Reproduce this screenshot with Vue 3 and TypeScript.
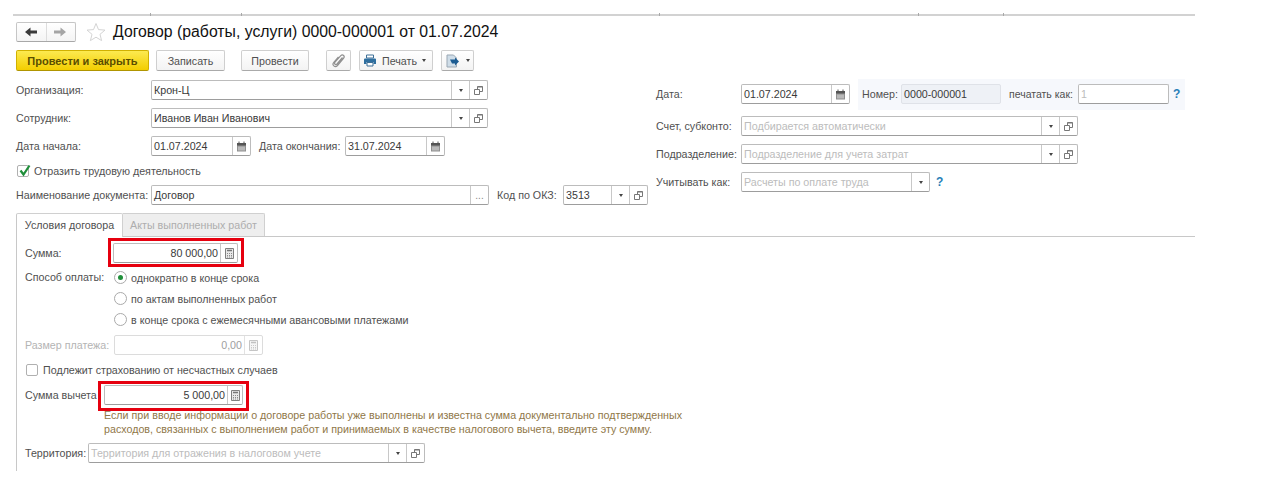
<template>
  <div class="page">
    <svg class="defs" width="0" height="0">
      <symbol id="i-open" viewBox="0 0 11 11">
        <path d="M4.500 4V1.500h5v5H7" fill="none" stroke="#777" />
        <path d="M4.500 2h5" stroke="#777" />
        <path d="M1.500 4.500h5v5h-5z" fill="#fff" stroke="#777" />
      </symbol>
      <symbol id="i-cal" viewBox="0 0 11 11">
        <path d="M1 2h9v8.500H1z" fill="#8f8f8f" />
        <path d="M1 2h9v2.500H1z" fill="#555" />
        <path d="M2 5.500h7v4H2z" fill="#b9b9b9" />
        <path d="M3 .5v2.500M8 .5v2.500" stroke="#555" />
      </symbol>
      <symbol id="i-calc" viewBox="0 0 11 11">
        <path d="M1.500 .5h8v10h-8z" fill="#e9e9e9" stroke="#808080" />
        <path d="M3 2.500h5" stroke="#777" stroke-width="1.500" />
        <path d="M3 5.500h5M3 7.500h5M3 9h5" stroke="#8a8a8a" stroke-dasharray="1 1" />
      </symbol>
    </svg>

    <i v-for="x in topTicks" :key="x" class="tick" :style="{ left: x + 'px' }"></i>

    <div class="title-row">
      <div class="nav-group">
        <span class="nav-cell">
          <svg width="13" height="10" viewBox="0 0 13 10"><path d="M0 5l5.500-4.500v3H12v3H5.500v3z" fill="#3a3a3a" /></svg>
        </span>
        <span class="nav-cell">
          <svg width="13" height="10" viewBox="0 0 13 10"><path d="M12 5L6.500.5v3H0v3h6.500v3z" fill="#a5a5a5" /></svg>
        </span>
      </div>
      <svg class="star" width="20" height="20" viewBox="0 0 20 20"><path d="M10 1.500l2.500 6.100 6.500.5-5 4.200 1.600 6.300-5.600-3.400-5.600 3.400L6 12.300 1 8.100l6.500-.5z" fill="none" stroke="#d4d4d4" /></svg>
      <h1 class="title">Договор (работы, услуги) 0000-000001 от 01.07.2024</h1>
    </div>

    <div class="toolbar">
      <button class="btn primary">Провести и закрыть</button>
      <button class="btn save">Записать</button>
      <button class="btn post">Провести</button>
      <button class="btn clip">
        <svg width="13" height="14" viewBox="0 0 13 14"><path d="M10.500 3.500 5 10c-1.300 1.400-3.200-.3-2-1.800l5.800-6.500c2-2 4.500.5 2.700 2.700L5.500 11.500c-2.500 2.700-6-.6-3.700-3.200L6.500 3" fill="none" stroke="#8f8f8f" stroke-width="1.200" /></svg>
      </button>
      <button class="btn print">
        <svg width="14" height="13" viewBox="0 0 14 13"><path d="M3.500 1h7v3h-7z" fill="#fff" stroke="#3d6f96" /><path d="M1 5.500q0-1 1-1h10q1 0 1 1V10h-2.500V8h-7v2H1z" fill="#2f6f9f" /><path d="M4 8.500h6v3.500H4z" fill="#fff" stroke="#3d6f96" /></svg>
        <span>Печать</span>
        <i class="caret"></i>
      </button>
      <button class="btn more">
        <svg width="14" height="14" viewBox="0 0 14 14"><path d="M1 1h6.500l3 3v9H1z" fill="#cfdde8" stroke="#9aa7b3" /><path d="M4 5.500l5 0V3.500l4 4-4 4v-2H6z" fill="#1c5c92" /></svg>
        <i class="caret"></i>
      </button>
    </div>

    <div class="head">
      <div class="head-left">
        <div class="row">
          <label class="lbl w135">Организация:</label>
          <div class="field w337"><span class="val">Крон-Ц</span><span class="cell"><i class="caret"></i></span><span class="cell"><svg class="ico"><use href="#i-open" /></svg></span></div>
        </div>
        <div class="row">
          <label class="lbl w135">Сотрудник:</label>
          <div class="field w337"><span class="val">Иванов Иван Иванович</span><span class="cell"><i class="caret"></i></span><span class="cell"><svg class="ico"><use href="#i-open" /></svg></span></div>
        </div>
        <div class="row">
          <label class="lbl w135">Дата начала:</label>
          <div class="field w100"><span class="val">01.07.2024</span><span class="cell"><svg class="ico"><use href="#i-cal" /></svg></span></div>
          <label class="lbl date-end">Дата окончания:</label>
          <div class="field w100"><span class="val">31.07.2024</span><span class="cell"><svg class="ico"><use href="#i-cal" /></svg></span></div>
        </div>
        <div class="row check-row">
          <span class="check">
            <svg width="14" height="13" viewBox="0 0 14 13"><path d="M2.500 6.500 5.500 10.500 11.500 1.500" fill="none" stroke="#1f8f3a" stroke-width="2.200" /></svg>
          </span>
          <span class="lbl">Отразить трудовую деятельность</span>
        </div>
        <div class="row name-row">
          <label class="lbl w135">Наименование документа:</label>
          <div class="field w338"><span class="val">Договор</span><span class="cell dots">...</span></div>
          <label class="lbl okz">Код по ОКЗ:</label>
          <div class="field w85"><span class="val">3513</span><span class="cell"><i class="caret"></i></span><span class="cell"><svg class="ico"><use href="#i-open" /></svg></span></div>
        </div>
      </div>

      <div class="head-right">
        <div class="row date-row">
          <label class="lbl w85">Дата:</label>
          <div class="field w109"><span class="val">01.07.2024</span><span class="cell"><svg class="ico"><use href="#i-cal" /></svg></span></div>
          <div class="num-panel">
            <label class="lbl">Номер:</label>
            <div class="field readonly w100"><span class="val">0000-000001</span></div>
            <label class="lbl small print-as">печатать как:</label>
            <div class="field w91"><span class="val ph">1</span></div>
            <span class="help">?</span>
          </div>
        </div>
        <div class="row">
          <label class="lbl w85">Счет, субконто:</label>
          <div class="field w337"><span class="val ph">Подбирается автоматически</span><span class="cell"><i class="caret"></i></span><span class="cell"><svg class="ico"><use href="#i-open" /></svg></span></div>
        </div>
        <div class="row">
          <label class="lbl w85">Подразделение:</label>
          <div class="field w337"><span class="val ph">Подразделение для учета затрат</span><span class="cell"><i class="caret"></i></span><span class="cell"><svg class="ico"><use href="#i-open" /></svg></span></div>
        </div>
        <div class="row">
          <label class="lbl w85">Учитывать как:</label>
          <div class="field w189"><span class="val ph">Расчеты по оплате труда</span><span class="cell"><i class="caret"></i></span></div>
          <span class="help help-inline">?</span>
        </div>
      </div>
    </div>

    <div class="tabs">
      <span class="tab active">Условия договора</span>
      <span class="tab">Акты выполненных работ</span>
    </div>

    <div class="tab-body">
      <div class="row">
        <label class="lbl w88">Сумма:</label>
        <div class="field w125 marked sum"><span class="val num">80 000,00</span><span class="cell"><svg class="ico"><use href="#i-calc" /></svg></span></div>
      </div>

      <div class="radios">
        <label class="lbl w89 pay-lbl">Способ оплаты:</label>
        <div class="radio-list">
          <div v-for="(opt, i) in payOptions" :key="opt" class="radio-row">
            <span class="radio" :class="{ on: i === 0 }"></span>
            <span class="lbl">{{ opt }}</span>
          </div>
        </div>
      </div>

      <div class="row pay-size">
        <label class="lbl w89 off">Размер платежа:</label>
        <div class="field w149 disabled"><span class="val num">0,00</span><span class="cell"><svg class="ico faded"><use href="#i-calc" /></svg></span></div>
      </div>

      <div class="row check-row insure">
        <span class="check"></span>
        <span class="lbl">Подлежит страхованию от несчастных случаев</span>
      </div>

      <div class="row">
        <label class="lbl w79">Сумма вычета</label>
        <div class="field w139 marked deduct"><span class="val num">5 000,00</span><span class="cell"><svg class="ico"><use href="#i-calc" /></svg></span></div>
      </div>

      <p class="note">
        Если при вводе информации о договоре работы уже выполнены и известна сумма документально подтвержденных<br />
        расходов, связанных с выполнением работ и принимаемых в качестве налогового вычета, введите эту сумму.
      </p>

      <div class="row">
        <label class="lbl w63">Территория:</label>
        <div class="field w337"><span class="val ph">Территория для отражения в налоговом учете</span><span class="cell"><i class="caret"></i></span><span class="cell"><svg class="ico"><use href="#i-open" /></svg></span></div>
      </div>
    </div>
  </div>
</template>

<script setup lang="ts">
const payOptions: string[] = [
  'однократно в конце срока',
  'по актам выполненных работ',
  'в конце срока с ежемесячными авансовыми платежами',
]

// small column ticks on the grey strip at the top
const topTicks: number[] = [137, 228, 646, 905, 990]
</script>

<style>
body {
  background: #fff;
}
</style>

<style scoped>
.page {
  position: relative;
  width: 1182px;
  height: 488px;
  margin-left: 13px;
  padding-top: 14px;
  font-family: "Liberation Sans", Arial, sans-serif;
  font-size: 10.700px;
  color: #505050;
  overflow: hidden;
}

.defs {
  position: absolute;
}

.tick {
  position: absolute;
  top: 13px;
  width: 1px;
  height: 3px;
  background: #a8a8a8;
}

.title-row {
  border-top: 2px solid #d2d2d2;
  padding: 6px 0 0 3px;
  display: flex;
  align-items: center;
  height: 20px;
}

.nav-group {
  display: flex;
  width: 60px;
  height: 20px;
  box-sizing: border-box;
  border: 1px solid #c6c6c6;
  border-bottom-color: #a8a8a8;
  border-radius: 2px;
  background: linear-gradient(#fff, #f4f4f4);
}

.nav-cell {
  flex: 1;
  display: flex;
  align-items: center;
  justify-content: center;
}

.nav-cell + .nav-cell {
  border-left: 1px solid #ddd;
}

.star {
  margin-left: 10px;
}

.title {
  margin: 0 0 0 7px;
  font-size: 15.800px;
  font-weight: normal;
  color: #111;
  white-space: nowrap;
}

.toolbar {
  display: flex;
  margin: 8px 0 0 3px;
  height: 21px;
}

.btn {
  height: 21px;
  padding: 0;
  display: flex;
  align-items: center;
  justify-content: center;
  gap: 6px;
  font: inherit;
  color: #505050;
  border: 1px solid #cfcfcf;
  border-bottom-color: #aaa;
  border-radius: 2px;
  background: linear-gradient(#fff, #f3f3f3);
}

.btn.primary {
  width: 133px;
  font-weight: bold;
  font-size: 11px;
  color: #5a4e00;
  border-color: #d1b100;
  border-bottom-color: #b09500;
  background: linear-gradient(#fcea50, #f3cd00);
}

.btn.save {
  width: 69px;
  margin-left: 7px;
}

.btn.post {
  width: 68px;
  margin-left: 16px;
}

.btn.clip {
  width: 25px;
  margin-left: 17px;
}

.btn.print {
  width: 74px;
  margin-left: 8px;
  padding-right: 3px;
  gap: 5px;
}

.btn.more {
  width: 33px;
  margin-left: 8px;
}

.head {
  display: flex;
  margin: 9px 0 0 3px;
}

.head-left {
  width: 632px;
  flex: none;
}

.head-right {
  margin-left: 8px;
}

.row {
  display: flex;
  align-items: center;
  height: 20px;
  margin-bottom: 8px;
}

.lbl {
  white-space: nowrap;
  flex: none;
}

.small {
  font-size: 10.500px;
}

.w135 { width: 135px; }
.w85 { width: 85px; }
.w88 { width: 88px; }
.w89 { width: 89px; }
.w79 { width: 79px; }
.w63 { width: 63px; }

.date-end {
  margin-left: 8px;
  width: 86px;
}

.okz {
  margin-left: 8px;
  width: 66px;
}

.field {
  display: flex;
  align-items: stretch;
  height: 20px;
  box-sizing: border-box;
  flex: none;
  background: #fff;
  border: 1px solid #bcbcbc;
  border-bottom-color: #9d9d9d;
  border-radius: 2px;
  color: #3a3a3a;
}

.field.w337 { width: 337px; }
.field.w338 { width: 338px; }
.field.w100 { width: 100px; }
.field.w85 { width: 85px; }
.field.w109 { width: 109px; }
.field.w91 { width: 91px; }
.field.w189 { width: 189px; }
.field.w125 { width: 125px; }
.field.w149 { width: 149px; }
.field.w139 { width: 139px; }

.val {
  flex: 1;
  min-width: 0;
  line-height: 18px;
  padding: 0 2px;
  white-space: nowrap;
}

.val.num {
  text-align: right;
}

.val.ph {
  color: #bcbcbc;
}

.cell {
  width: 17px;
  flex: none;
  display: flex;
  align-items: center;
  justify-content: center;
  border-left: 1px solid #c8c8c8;
}

.sum .cell {
  width: 16px;
}

.deduct .cell {
  width: 14px;
}

.cell.dots {
  color: #888;
  font-size: 10px;
}

.ico {
  width: 11px;
  height: 11px;
}

.ico.faded {
  opacity: 0.45;
}

.caret {
  display: inline-block;
  border-left: 2.500px solid transparent;
  border-right: 2.500px solid transparent;
  border-top: 3px solid #444;
}

.check-row {
  height: 20px;
  margin: -3px 0 4px;
}

.check {
  width: 12px;
  height: 12px;
  box-sizing: border-box;
  margin: 0 5px 0 1px;
  display: flex;
  align-items: center;
  border: 1px solid #b0b0b0;
  border-radius: 2px;
  background: #fff;
}

.check svg {
  flex: none;
  margin-top: -1px;
}

.name-row {
  margin-bottom: 0;
}

.date-row {
  margin-top: 4px;
  margin-bottom: 12px;
}

.num-panel {
  margin-left: 8px;
  padding: 0 4px;
  height: 31px;
  width: 327px;
  box-sizing: border-box;
  display: flex;
  align-items: center;
  background: #f6f8fc;
}

.num-panel .lbl:first-child {
  width: 39px;
}

.field.readonly {
  background: #eef1f6;
  border-color: #dfe2e8;
}

.print-as {
  margin-left: 8px;
  width: 69px;
}

.help {
  margin-left: 4px;
  color: #2a7fb8;
  font-weight: bold;
  font-size: 12px;
}

.help-inline {
  margin-left: 6px;
}

.tabs {
  display: flex;
  margin: 8px 0 0 3px;
  height: 24px;
  box-sizing: border-box;
  border-bottom: 1px solid #c8c8c8;
}

.tab {
  height: 23px;
  box-sizing: border-box;
  line-height: 22px;
  white-space: nowrap;
  color: #adadad;
  background: #eee;
  border: 1px solid #d0d0d0;
  border-bottom: 0;
  border-left: 0;
  border-radius: 0 2px 0 0;
  width: 142px;
  text-align: center;
}

.tab.active {
  width: 107px;
  height: 24px;
  color: #505050;
  background: #fff;
  border-left: 1px solid #c8c8c8;
  border-radius: 2px 2px 0 0;
}

.tab-body {
  margin-left: 3px;
  padding: 6px 0 0 8px;
  height: 228px;
  border-left: 1px solid #c8c8c8;
}

.tab-body .row {
  margin-bottom: 0;
}

/* red frames are drawn over the screenshot, they do not take part in the layout */
.marked {
  position: relative;
}

.marked::after {
  content: "";
  position: absolute;
  border: 3px solid #e6000f;
  pointer-events: none;
}

.sum::after {
  inset: -6px -7px -5px -6px;
}

.deduct::after {
  inset: -5px -7px -7px -7px;
}

.radios {
  display: flex;
  margin-top: 4px;
}

.pay-lbl {
  line-height: 21px;
}

.radio-list {
  display: flex;
  flex-direction: column;
}

.radio-row {
  display: flex;
  align-items: center;
  height: 21px;
}

.radio {
  width: 13px;
  height: 13px;
  box-sizing: border-box;
  margin-right: 4px;
  border: 1px solid #aaa;
  border-radius: 50%;
  display: flex;
  align-items: center;
  justify-content: center;
}

.radio.on::after {
  content: "";
  width: 5px;
  height: 5px;
  border-radius: 50%;
  background: #1f8f3a;
}

.tab-body .pay-size {
  margin-top: 5px;
}

.off {
  color: #b4b4b4;
}

.field.disabled {
  border-color: #dcdcdc;
  color: #a0a0a0;
}

.field.disabled .cell {
  border-left-color: #e2e2e2;
}

.tab-body .insure {
  margin: 5px 0 5px;
}

.note {
  margin: 3px 0 0 79px;
  line-height: 14px;
  color: #8f7748;
  white-space: nowrap;
}

.note + .row {
  margin-top: 7px;
}
</style>
